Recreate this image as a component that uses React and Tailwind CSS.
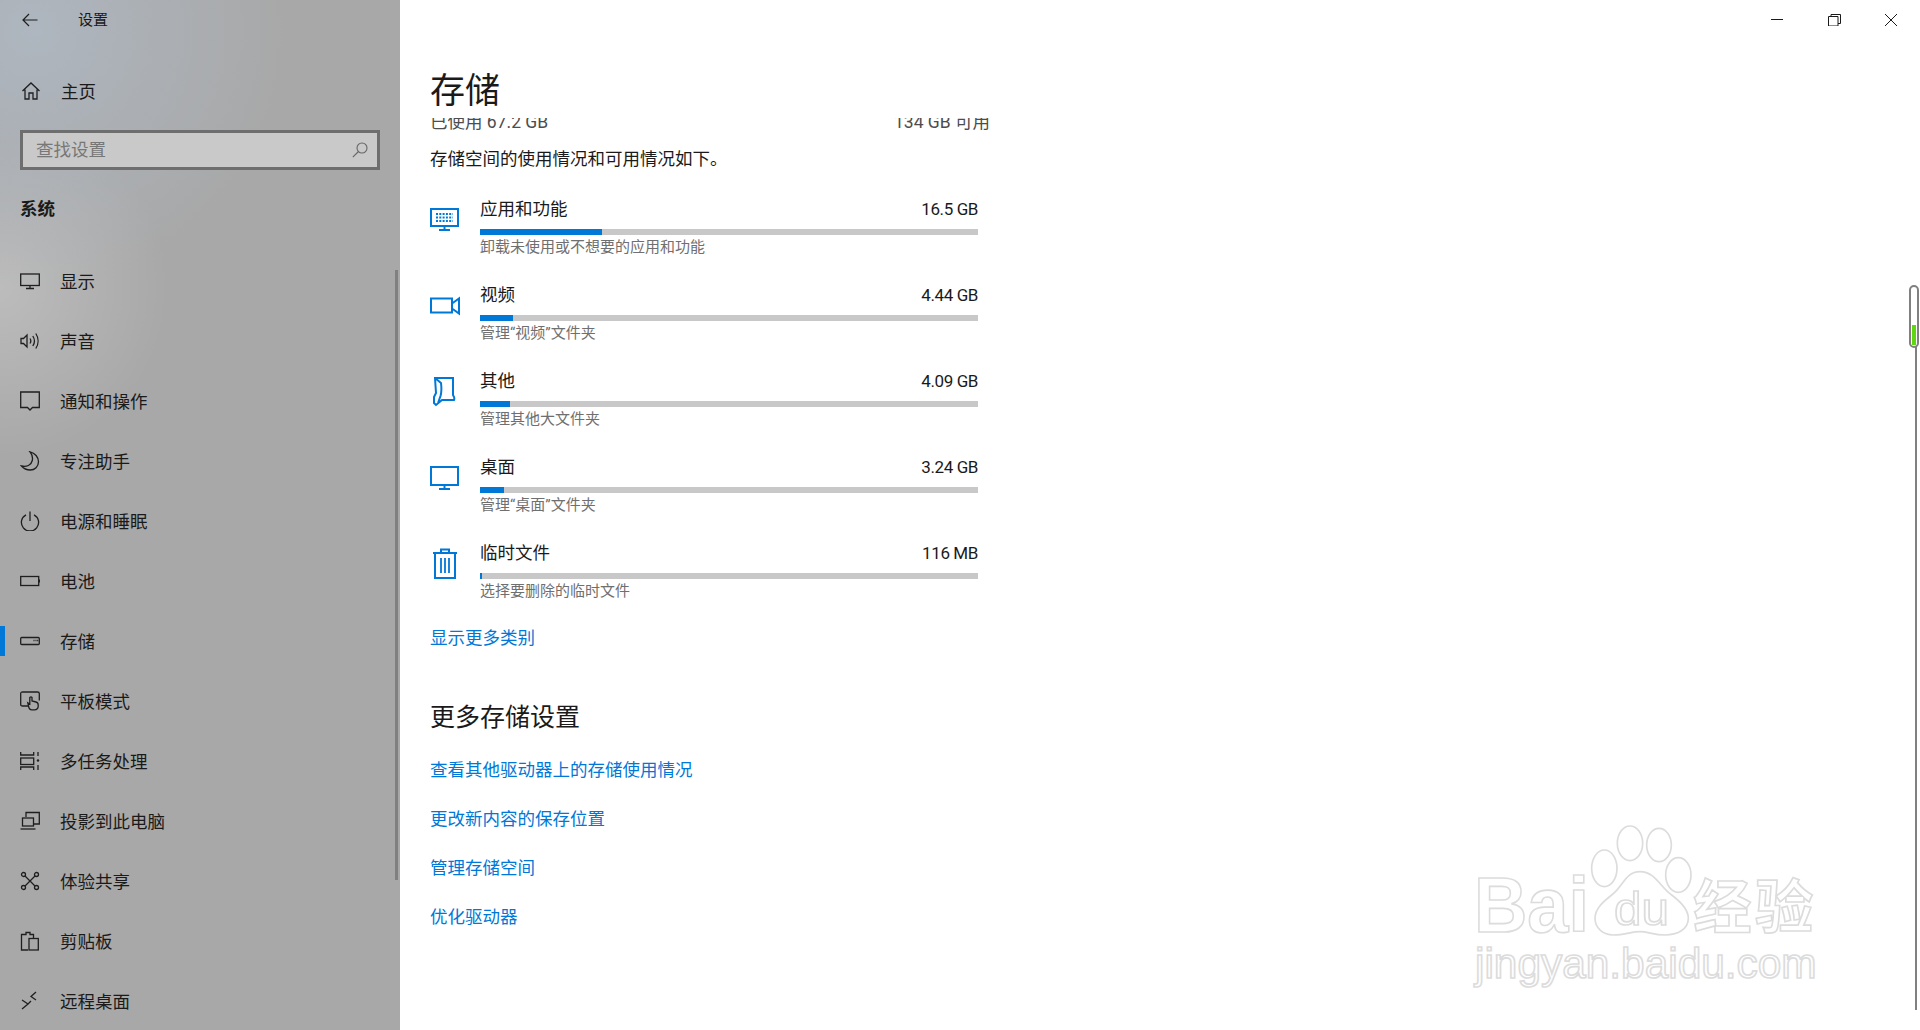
const Ico = ({ children }) => (
  <svg viewBox="0 0 20 20" fill="none" stroke="#1f1f1f" strokeWidth="1.3" className="w-5 h-5 shrink-0">
    {children}
  </svg>
);

const navItems = [
  {
    label: '显示',
    icon: (
      <>
        <rect x="0.7" y="3" width="18.6" height="11.5" />
        <path d="M10 14.5v3M6 17.5h8" />
      </>
    ),
  },
  {
    label: '声音',
    icon: (
      <>
        <path d="M1 7.5h2.5L7 4v12l-3.5-3.500H1z" />
        <path d="M10 7.500c1 1.500 1 3.500 0 5M12.800 5c2 3 2 7 0 10M15.800 2.500c3 4.500 3 10.500 0 15" />
      </>
    ),
  },
  {
    label: '通知和操作',
    icon: <path d="M.7 1h18.600v15.500H12.500L10 19l-2.500-2.500H.7z" />,
  },
  {
    label: '专注助手',
    icon: <path d="M10 .8c5 1.200 8.500 5.400 8.500 10 0 4.700-3.800 8.200-8.200 8.200-3.800 0-7-1.800-8.800-4 5 1.300 9.800-.8 10.800-5.500.6-3-.2-6.200-2.300-8.700z" />,
  },
  {
    label: '电源和睡眠',
    icon: (
      <>
        <path d="M6 3.800a8.600 8.600 0 1 0 8 0" />
        <path d="M10 .5v9.500" />
      </>
    ),
  },
  {
    label: '电池',
    icon: (
      <>
        <rect x="0.7" y="5.500" width="18" height="9" />
        <path d="M19.500 8.500v3" />
      </>
    ),
  },
  {
    label: '存储',
    icon: (
      <>
        <rect x="0.7" y="6.500" width="18.600" height="7" rx="1" />
        <path d="M13.500 9.500h1M15.500 9.500h1M17.200 9.500h1" />
      </>
    ),
  },
  {
    label: '平板模式',
    icon: (
      <>
        <path d="M8 15H2.500Q.7 15 .7 13.500V2.500Q.7 1 2.500 1h15q1.800 0 1.800 1.500v7" />
        <path d="M12 18.800q-3 0-3.500-4l-.7-3 2 1.200V6.500q1.200-1.300 2.200 0V10l4 1q2.200.5 2.200 3v1q0 3.800-3.800 3.800z" fill="#a8a8a8" />
      </>
    ),
  },
  {
    label: '多任务处理',
    icon: (
      <>
        <path d="M.7 1v3h13V1M.7 19v-3h13v3" />
        <rect x="0.7" y="7" width="13" height="6.500" />
        <path d="M18 1v4M18 14v5" />
        <circle cx="18" cy="9.500" r="1.200" fill="#1f1f1f" stroke="none" />
      </>
    ),
  },
  {
    label: '投影到此电脑',
    icon: (
      <>
        <path d="M6 6V1.500h13.300v11.500H14" />
        <rect x="2.500" y="7" width="11" height="8" />
        <path d="M.5 18h15" />
      </>
    ),
  },
  {
    label: '体验共享',
    icon: (
      <>
        <circle cx="3.500" cy="3.500" r="2" />
        <circle cx="16.500" cy="3.500" r="2" />
        <circle cx="3.500" cy="16.500" r="2" />
        <circle cx="16.500" cy="16.500" r="2" />
        <path d="M5 5l10 10M15 5L5 15" />
      </>
    ),
  },
  {
    label: '剪贴板',
    icon: (
      <>
        <path d="M8 19H1.500V3.500H6V1.500h4V3.500h3.500V7" />
        <rect x="9" y="7.500" width="9.300" height="11.500" />
      </>
    ),
  },
  {
    label: '远程桌面',
    icon: <path d="M2 9l6 4-6 5M16 1L11 5.500l5 3.500M8 13l3-3" />,
  },
];

const Blue = ({ children }) => (
  <svg viewBox="0 0 30 30" fill="none" stroke="#0078d7" strokeWidth="2" className="w-[30px] h-[30px] overflow-visible">
    {children}
  </svg>
);

const storageRows = [
  {
    name: '应用和功能',
    size: '16.5 GB',
    fill: 'w-[122px]',
    sub: '卸载未使用或不想要的应用和功能',
    icon: (
      <>
        <rect x="1" y="3" width="27" height="17" />
        <path d="M14.500 20v3.500M9 24h11" />
        <path d="M6 8h17M6 11.500h17M6 15h17" strokeWidth="2" strokeDasharray="2 1.300" />
      </>
    ),
  },
  {
    name: '视频',
    size: '4.44 GB',
    fill: 'w-[33px]',
    sub: '管理“视频”文件夹',
    icon: (
      <>
        <rect x="1" y="6.500" width="21" height="14" />
        <path d="M22 11.500l7-5v15l-7-5" />
      </>
    ),
  },
  {
    name: '其他',
    size: '4.09 GB',
    fill: 'w-[30px]',
    sub: '管理其他大文件夹',
    icon: <path d="M5 0h18v17q2 3 1 5h-12l-6 5-2-2V19l2-4zM5 0l6 5q1 8-.5 13L8 25" />,
  },
  {
    name: '桌面',
    size: '3.24 GB',
    fill: 'w-[24px]',
    sub: '管理“桌面”文件夹',
    icon: (
      <>
        <rect x="1" y="3" width="27" height="18" />
        <path d="M14.500 21v3.500M9 25h11" />
      </>
    ),
  },
  {
    name: '临时文件',
    size: '116 MB',
    fill: 'w-[2px]',
    sub: '选择要删除的临时文件',
    icon: (
      <>
        <path d="M3 3h24M11 3V-.5h8V3M5 3v25h20V3" />
        <path d="M11 8v15M15 8v15M19 8v15" strokeWidth="1.800" />
      </>
    ),
  },
];

const links = ['查看其他驱动器上的存储使用情况', '更改新内容的保存位置', '管理存储空间', '优化驱动器'];

const Watermark = () => (
  <svg
    viewBox="0 0 1110 570"
    className="absolute left-[1460px] top-[810px] w-[370px] h-[190px] pointer-events-none"
    fill="#fff"
    stroke="#dcdcdc"
    strokeWidth="5"
  >
    <text x="42" y="365" fontFamily="Liberation Sans" fontWeight="700" fontSize="235" textLength="345" lengthAdjust="spacingAndGlyphs">
      Bai
    </text>
    <ellipse cx="433" cy="175" rx="38" ry="55" />
    <ellipse cx="510" cy="100" rx="38" ry="52" />
    <ellipse cx="597" cy="105" rx="37" ry="50" />
    <ellipse cx="655" cy="195" rx="38" ry="52" />
    <path d="M540 185c45 0 60 45 95 70 40 30 50 50 50 70 0 35-35 50-70 50-35 0-50-10-75-10s-45 10-80 10c-30 0-55-20-55-50 0-30 25-50 50-70 35-25 40-70 85-70z" />
    <text x="462" y="345" fontFamily="Liberation Sans" fontSize="140" textLength="165" lengthAdjust="spacingAndGlyphs">
      du
    </text>
    <text x="700" y="355" fontFamily="Noto Sans CJK SC" fontWeight="700" fontSize="175" textLength="360">
      经验
    </text>
    <text x="45" y="505" fontFamily="Liberation Sans" fontSize="128" textLength="1025" lengthAdjust="spacingAndGlyphs">
      jingyan.baidu.com
    </text>
  </svg>
);

const App = () => {
  return (
    <div className="relative flex h-screen overflow-hidden bg-white text-[17.5px] leading-6 text-[#1a1a1a] font-['Roboto','Noto_Sans_CJK_SC',sans-serif]">
      <aside className="relative w-[400px] shrink-0 overflow-hidden bg-[#a8a8a8] bg-[radial-gradient(circle_at_8%_3%,#aeb6bf_0%,transparent_24%),radial-gradient(circle_at_0%_28%,#bcbcbc_0%,transparent_20%)]">
        <div className="flex items-center h-10 pl-[22px]">
          <svg viewBox="0 0 16 14" fill="none" stroke="#1f1f1f" strokeWidth="1.200" className="w-4 h-[14px]">
            <path d="M15.500 7H1M7 1L1 7l6 6" />
          </svg>
          <span className="ml-10 text-[15px]">设置</span>
        </div>

        <div className="flex items-center h-[60px] mt-[21px] pl-[22px] gap-[21px]">
          <svg viewBox="0 0 18 18" fill="none" stroke="#1f1f1f" strokeWidth="1.300" className="w-[18px] h-[18px]">
            <path d="M.5 9L9 1l8.500 8M3 7.500V17h4v-6h4v6h4V7.500" />
          </svg>
          <span className="pt-[2px]">主页</span>
        </div>

        <div className="flex items-center justify-between h-10 mx-5 mt-[9px] pl-[13px] pr-[9px] border-[3px] border-[#6e6e6e] bg-[#c9c9c9]">
          <span className="text-[#777777]">查找设置</span>
          <svg viewBox="0 0 16 16" fill="none" stroke="#666666" strokeWidth="1.100" className="w-4 h-4">
            <circle cx="10" cy="6" r="5" />
            <path d="M6.500 9.500L.8 15.200" />
          </svg>
        </div>

        <div className="mt-[27px] pl-5 font-bold">系统</div>

        <nav className="mt-[30px]">
          {navItems.map((item) => (
            <div key={item.label} className="relative flex items-center h-[60px] pl-5 gap-5">
              {item.label === '存储' && <div className="absolute left-0 top-[15px] w-[5px] h-[30px] bg-[#0078d7]"></div>}
              <Ico>{item.icon}</Ico>
              <span className="pt-[2px]">{item.label}</span>
            </div>
          ))}
        </nav>

        <div className="absolute left-[395px] top-[270px] w-[3px] h-[610px] bg-[#808080]"></div>
      </aside>

      <main className="flex-1 min-w-0 flex flex-col pl-[30px]">
        <h1 className="h-[118px] shrink-0 pt-[69px] text-[35px] leading-[46px] font-normal overflow-hidden">存储</h1>
        <div className="flex-1 min-h-0 overflow-hidden">
          <div className="flex justify-between w-[560px] -mt-2 text-[#4d4d4d]">
            <span>已使用 67.2 GB</span>
            <span>134 GB 可用</span>
          </div>
          <p className="mt-[13px] mb-[25px]">存储空间的使用情况和可用情况如下。</p>

          {storageRows.map((row) => (
            <div key={row.name} className="flex h-[86px] w-[548px]">
              <div className="w-[50px] pt-[10px]">
                <Blue>{row.icon}</Blue>
              </div>
              <div className="flex-1">
                <div className="flex justify-between pt-px">
                  <span>{row.name}</span>
                  <span className="text-[17px] tracking-[-0.4px]">{row.size}</span>
                </div>
                <div className="h-[6px] mt-2 bg-[#c8c8c8]">
                  <div className={'h-full bg-[#0078d7] ' + row.fill}></div>
                </div>
                <div className="h-5 mt-[2px] text-[15px] leading-5 text-[#6f6f6f]">{row.sub}</div>
              </div>
            </div>
          ))}

          <a className="block text-[#0078d7]">显示更多类别</a>
          <h2 className="mt-[51px] text-[25px] leading-[34px] font-normal">更多存储设置</h2>
          <div className="mt-[23px] flex flex-col gap-[25px]">
            {links.map((l) => (
              <a key={l} className="text-[#0078d7]">{l}</a>
            ))}
          </div>
        </div>
      </main>

      <svg viewBox="0 0 126 12" fill="none" stroke="#1a1a1a" strokeWidth="1" className="absolute left-[1771px] top-[14px] w-[126px] h-3">
        <path d="M0 5.500h12" />
        <path d="M57.500 2.500h9.500v9.500h-9.500zM60 2.500V.5h9.500v9h-2.500" />
        <path d="M114 0l12 12M126 0l-12 12" />
      </svg>

      <div className="absolute left-[1915px] top-[340px] w-[2px] h-[670px] bg-[#808080]"></div>
      <div className="absolute left-[1909px] top-[285px] w-[10px] h-[63px] rounded-full border-2 border-[#808080] bg-white">
        <div className="absolute left-[1px] top-[38px] w-1 h-5 bg-[#5fd60f]"></div>
      </div>

      <Watermark />
    </div>
  );
};

export default App;
